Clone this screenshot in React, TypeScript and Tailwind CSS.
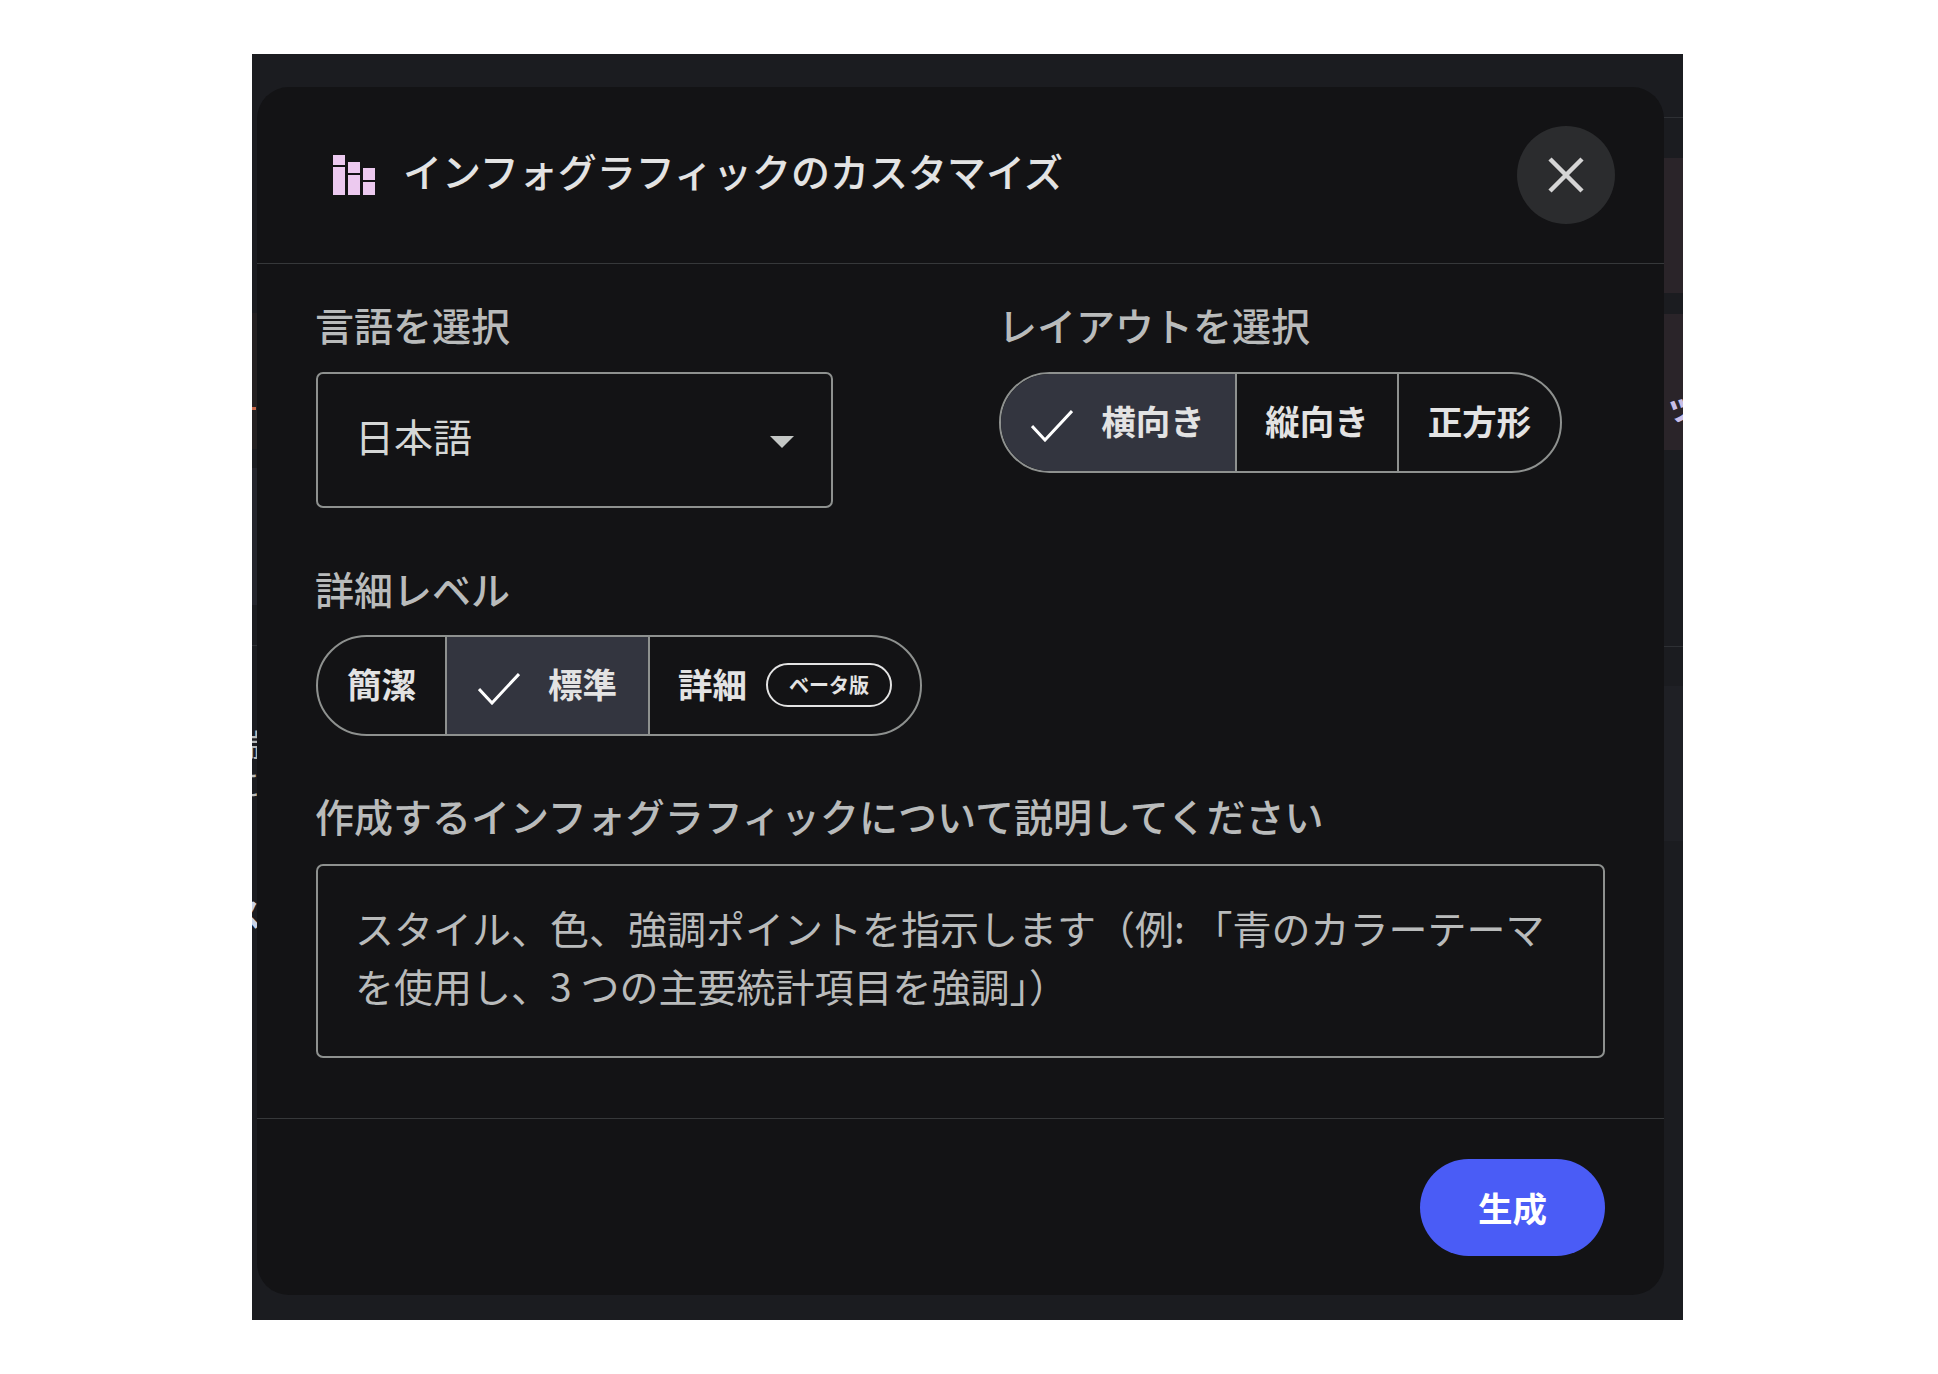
const jp = 'font-["Noto_Sans_CJK_JP","Noto_Sans",sans-serif]'

function Tick() {
  return (
    <svg className="mr-[28px] mt-[7px] h-[32px] w-[42px] shrink-0" viewBox="0 0 42 32" fill="none" stroke="#ffffff" strokeWidth="3">
      <path d="M1 16 L14 30 L41 1" />
    </svg>
  )
}

function Seg({ label, on, w, children }: { label: string; on?: boolean; w: string; children?: React.ReactNode }) {
  return (
    <div className={`flex h-full items-center justify-center ${w} ${on ? 'bg-[#33353f]' : ''}`}>
      {on && <Tick />}
      <span className="-translate-y-[2px] text-[34.5px] font-bold leading-none text-[#e3e3e3]">{label}</span>
      {children}
    </div>
  )
}

export default function App() {
  return (
    <div className={`min-h-[1374px] bg-white pl-[252px] pt-[54px] ${jp}`}>
      <div className="relative h-[1266px] w-[1431px] overflow-hidden bg-[#1b1c20] pl-[5px] pt-[33px]">
        {/* page behind the dialog, only its edges show */}
        <div className="absolute right-0 top-[63px] h-px w-[19px] bg-[#2e3034]" />
        <div className="absolute right-0 top-[104px] h-[135px] w-[19px] bg-[#2a2429]" />
        <div className="absolute right-0 top-[260px] h-[136px] w-[19px] bg-[#2a2429]" />
        <div className="absolute right-[-16px] top-[334px] text-[34px] font-bold leading-none text-[#c9bfe8]">ッ</div>
        <div className="absolute right-0 top-[592px] h-px w-[19px] bg-[#2e3034]" />
        <div className="absolute right-0 top-[632px] h-[155px] w-[19px] bg-[#1f2025]" />

        <div className="absolute left-0 top-[259px] h-[136px] w-[5px] bg-[#242021]" />
        <div className="absolute left-0 top-[353px] h-[3px] w-[4px] bg-[#c8694a]" />
        <div className="absolute left-0 top-[414px] h-[137px] w-[5px] bg-[#24252c]" />
        <div className="absolute left-0 top-[591px] h-px w-[5px] bg-[#2e3034]" />
        <div className="absolute left-[-24px] top-[672px] text-[32px] leading-none text-[#b9bbbb]">端</div>
        <div className="absolute left-[-24px] top-[712px] text-[32px] leading-none text-[#b9bbbb]">に</div>
        <div className="absolute left-[-24px] top-[842px] text-[34px] font-bold leading-none text-[#c9d2e6]">ス</div>

        <div className="relative flex h-[1208px] w-[1407px] flex-col rounded-[32px] bg-[#131315]">
          <div className="flex h-[177px] shrink-0 items-center border-b border-[#36383a] pl-[76px] pr-[49px]">
            <svg className="h-[40px] w-[42px]" viewBox="0 0 42 40" fill="#ecc9ef">
              <rect x="0" y="0" width="12" height="10" />
              <rect x="0" y="12" width="12" height="28" />
              <rect x="15" y="7" width="12" height="11" />
              <rect x="15" y="20" width="12" height="20" />
              <rect x="30" y="13" width="12" height="12" />
              <rect x="30" y="27" width="12" height="13" />
            </svg>
            <h2 className="ml-[28px] -translate-y-[5px] text-[39px] font-medium leading-none text-[#e3e3e3]">
              インフォグラフィックのカスタマイズ
            </h2>
            <button className="ml-auto flex h-[98px] w-[98px] items-center justify-center rounded-full bg-[#2b2c2e]">
              <svg className="h-[36px] w-[36px]" viewBox="0 0 36 36" fill="none" stroke="#d5d5d5" strokeWidth="4.5">
                <path d="M2 2 L34 34 M34 2 L2 34" />
              </svg>
            </button>
          </div>

          <div className="flex-1 pl-[59px] pr-[59px]">
            <div className="flex">
              <div className="w-[683px]">
                <div className="mt-[37px] -ml-px text-[39px] font-medium leading-[46px] text-[#b9bbbb]">言語を選択</div>
                <div className="mt-[25px] flex h-[136px] w-[517px] items-center justify-between rounded-[7px] border-2 border-[#8e918f] pl-[37px] pr-[37px]">
                  <span className="pb-[10px] text-[39px] leading-none text-[#d5d7d6]">日本語</span>
                  <span className="mt-[4px] h-0 w-0 border-x-[12px] border-t-[12px] border-x-transparent border-t-[#c4c7c5]" />
                </div>
              </div>
              <div>
                <div className="mt-[37px] -ml-px text-[39px] font-medium leading-[46px] text-[#b9bbbb]">レイアウトを選択</div>
                <div className="mt-[25px] flex h-[101px] w-[563px] overflow-hidden rounded-full border-2 border-[#8e918f] divide-x-2 divide-[#8e918f]">
                  <Seg label="横向き" on w="w-[236px]" />
                  <Seg label="縦向き" w="w-[162px]" />
                  <Seg label="正方形" w="flex-1" />
                </div>
              </div>
            </div>

            <div className="mt-[57px] -ml-px text-[39px] font-medium leading-[46px] text-[#b9bbbb]">詳細レベル</div>
            <div className="mt-[24px] flex h-[101px] w-[606px] overflow-hidden rounded-full border-2 border-[#8e918f] divide-x-2 divide-[#8e918f]">
              <Seg label="簡潔" w="w-[129px]" />
              <Seg label="標準" on w="w-[203px]" />
              <Seg label="詳細" w="flex-1">
                <span className="ml-[19px] flex h-[44px] w-[126px] -translate-y-px items-center justify-center rounded-full border-2 border-[#e3e3e3] text-[20px] font-bold leading-none text-[#e3e3e3]">
                  ベータ版
                </span>
              </Seg>
            </div>

            <div className="mt-[56px] -ml-px text-[39px] font-medium leading-[46px] text-[#b9bbbb]">作成するインフォグラフィックについて説明してください</div>
            <div className="mt-[26px] h-[194px] w-[1289px] rounded-[7px] border-2 border-[#8e918f] pl-[37px] pr-[37px] pt-[32px] text-[39px] leading-[58px] text-[#b9bbbb]">
              <div className="whitespace-nowrap">スタイル、色、強調ポイントを指示します（例: 「青のカラーテーマ</div>
              <div className="whitespace-nowrap">を使用し、3 つの主要統計項目を強調」）</div>
            </div>
          </div>

          <div className="flex h-[177px] shrink-0 items-start justify-end border-t border-[#36383a] pr-[59px] pt-[40px]">
            <button className="flex h-[97px] w-[185px] items-center justify-center rounded-full bg-[#4a5cf6] text-[34.5px] font-bold leading-none text-white">
              生成
            </button>
          </div>
        </div>
      </div>
    </div>
  )
}
